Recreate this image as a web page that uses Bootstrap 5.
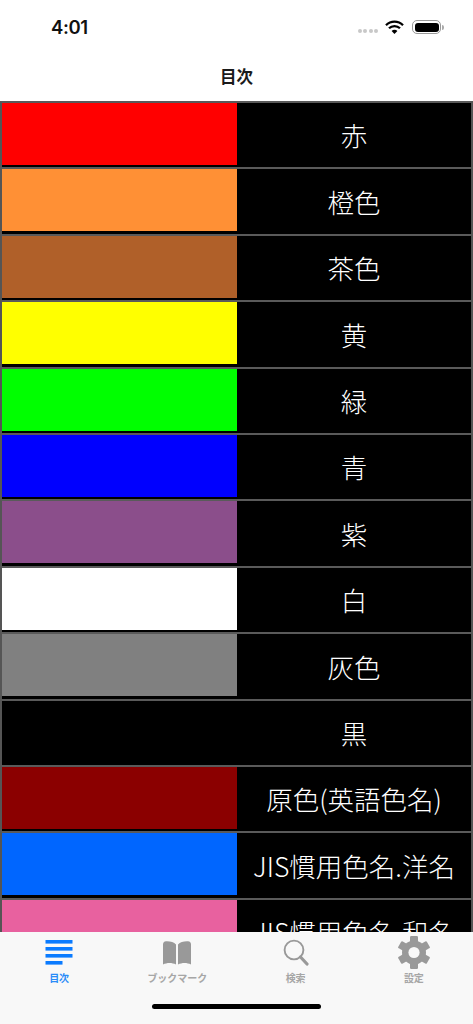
<!DOCTYPE html>
<html lang="ja">
<head>
<meta charset="utf-8">
<title>目次</title>
<link href="https://cdn.jsdelivr.net/npm/bootstrap@5.3.0/dist/css/bootstrap.min.css" rel="stylesheet">
<style>
html,body{width:473px;height:1024px;overflow:hidden;background:#fff;}
body{font-family:"Inter","Noto Sans CJK JP",sans-serif;}
.phone-screen{height:1024px;}
.status-strip{height:54px;padding:0 29px 0 51px;}
.clock-text{font-size:18.5px;font-weight:600;color:#111;line-height:1;letter-spacing:-.4px;}
.signal-dot{width:4px;height:4px;border-radius:50%;background:#c8c8c8;}
.signal-dots{gap:1.5px;margin-top:8px;margin-right:7px;}
.batt-box{width:29px;height:14px;border:1.5px solid #999;border-radius:5px;padding:1.5px;}
.batt-fill{background:#000;border-radius:3px;height:100%;}
.batt-tip{width:2px;height:5px;background:#aaa;border-radius:0 2px 2px 0;margin-left:1px;}
.title-strip{height:47px;font-size:16.5px;font-weight:600;color:#1a1a1a;font-family:"Noto Sans CJK JP",sans-serif;padding-bottom:2px;}
.index-list{height:831px;overflow:hidden;background:#000;}
.index-row{height:66.4px;flex:none;border-top:2px solid #5a5a5a;border-left:2px solid #555;border-right:2px solid #555;background:#000;}
.swatch-box{width:235px;height:62px;flex:none;}
.name-box{flex:1;height:100%;color:#fff;font-family:"Noto Sans CJK JP",sans-serif;font-size:26.5px;font-weight:300;line-height:1;white-space:nowrap;overflow:hidden;padding-top:1px;}
.tab-strip{height:92px;background:#f8f8f8;padding-top:4px;}
.tab-cell{width:118.25px;flex:none;color:#a6a6a6;font-family:"Noto Sans CJK JP",sans-serif;font-size:10px;font-weight:600;line-height:1;}
.tab-on{color:#2a8cf8;}
.tab-icon{height:33px;}
.tab-label{margin-top:4px;}
.home-pill{width:169px;height:5px;background:#000;border-radius:3px;margin:21px auto 0;}
</style>
</head>
<body>
<div class="phone-screen d-flex flex-column">
  <div class="status-strip d-flex align-items-center justify-content-between">
    <div class="clock-text">4:01</div>
    <div class="d-flex align-items-center">
      <div class="signal-dots d-flex"><span class="signal-dot"></span><span class="signal-dot"></span><span class="signal-dot"></span><span class="signal-dot"></span></div>
      <svg width="19" height="15" viewBox="0 0 19 15" class="me-2"><path d="M1 5.2a12 12 0 0 1 17 0" fill="none" stroke="#000" stroke-width="2.3"/><path d="M4 8.3a7.8 7.8 0 0 1 11 0" fill="none" stroke="#000" stroke-width="2.3"/><path d="M9.5 14L6.6 11a4 4 0 0 1 5.8 0z" fill="#000"/></svg>
      <div class="batt-box"><div class="batt-fill"></div></div><div class="batt-tip"></div>
    </div>
  </div>
  <div class="title-strip d-flex align-items-center justify-content-center">目次</div>
  <div class="index-list d-flex flex-column">
    <div class="index-row d-flex"><div class="swatch-box" style="background:#ff0000"></div><div class="name-box d-flex align-items-center justify-content-center">赤</div></div>
    <div class="index-row d-flex"><div class="swatch-box" style="background:#ff9035"></div><div class="name-box d-flex align-items-center justify-content-center">橙色</div></div>
    <div class="index-row d-flex"><div class="swatch-box" style="background:#b06029"></div><div class="name-box d-flex align-items-center justify-content-center">茶色</div></div>
    <div class="index-row d-flex"><div class="swatch-box" style="background:#ffff00"></div><div class="name-box d-flex align-items-center justify-content-center">黄</div></div>
    <div class="index-row d-flex"><div class="swatch-box" style="background:#00ff00"></div><div class="name-box d-flex align-items-center justify-content-center">緑</div></div>
    <div class="index-row d-flex"><div class="swatch-box" style="background:#0000ff"></div><div class="name-box d-flex align-items-center justify-content-center">青</div></div>
    <div class="index-row d-flex"><div class="swatch-box" style="background:#8b4e8b"></div><div class="name-box d-flex align-items-center justify-content-center">紫</div></div>
    <div class="index-row d-flex"><div class="swatch-box" style="background:#ffffff"></div><div class="name-box d-flex align-items-center justify-content-center">白</div></div>
    <div class="index-row d-flex"><div class="swatch-box" style="background:#808080"></div><div class="name-box d-flex align-items-center justify-content-center">灰色</div></div>
    <div class="index-row d-flex"><div class="swatch-box" style="background:#000000"></div><div class="name-box d-flex align-items-center justify-content-center">黒</div></div>
    <div class="index-row d-flex"><div class="swatch-box" style="background:#8b0000"></div><div class="name-box d-flex align-items-center justify-content-center">原色(英語色名)</div></div>
    <div class="index-row d-flex"><div class="swatch-box" style="background:#0066ff"></div><div class="name-box d-flex align-items-center justify-content-center">JIS慣用色名.洋名</div></div>
    <div class="index-row d-flex"><div class="swatch-box" style="background:#e8619f"></div><div class="name-box d-flex align-items-center justify-content-center">JIS慣用色名.和名</div></div>
  </div>
  <div class="tab-strip">
    <div class="d-flex">
      <div class="tab-cell tab-on d-flex flex-column align-items-center">
        <div class="tab-icon d-flex align-items-center"><svg width="28" height="25" viewBox="0 0 28 25" fill="#0a7bff"><rect width="27" height="3.6" x="0.5" y="0"/><rect width="27" height="3.6" x="0.5" y="7"/><rect width="27" height="3.6" x="0.5" y="14"/><rect width="17" height="3.6" x="0.5" y="21"/></svg></div>
        <div class="tab-label">目次</div>
      </div>
      <div class="tab-cell d-flex flex-column align-items-center">
        <div class="tab-icon d-flex align-items-center"><svg width="30" height="25" viewBox="0 0 30 25" fill="#999"><path d="M14 4.5C12 2 8 1 4 1.2 2 1.3 1 2.5 1 4.5V24.5C5 22.5 10 22.5 14 24.5z"/><path d="M16 4.5C18 2 22 1 26 1.2 28 1.3 29 2.5 29 4.5V24.5C25 22.5 20 22.5 16 24.5z"/></svg></div>
        <div class="tab-label">ブックマーク</div>
      </div>
      <div class="tab-cell d-flex flex-column align-items-center">
        <div class="tab-icon d-flex align-items-center"><svg width="26" height="27" viewBox="0 0 26 27" fill="none" stroke="#999"><circle cx="11" cy="11" r="9.4" stroke-width="1.9"/><path d="M17.5 18L24 25" stroke-width="3.2" stroke-linecap="round"/></svg></div>
        <div class="tab-label">検索</div>
      </div>
      <div class="tab-cell d-flex flex-column align-items-center">
        <div class="tab-icon d-flex align-items-center"><svg width="32" height="33" viewBox="-16 -16.500 32 33"><g fill="#999"><circle r="12"/><rect x="-4" y="-16.500" width="8" height="33" rx="1.200"/><rect x="-4" y="-16.500" width="8" height="33" rx="1.200" transform="rotate(60)"/><rect x="-4" y="-16.500" width="8" height="33" rx="1.200" transform="rotate(120)"/></g><circle r="5.600" fill="#f8f8f8"/></svg></div>
        <div class="tab-label">設定</div>
      </div>
    </div>
    <div class="home-pill"></div>
  </div>
</div>
<script src="https://cdn.jsdelivr.net/npm/bootstrap@5.3.0/dist/js/bootstrap.bundle.min.js"></script>
</body>
</html>
